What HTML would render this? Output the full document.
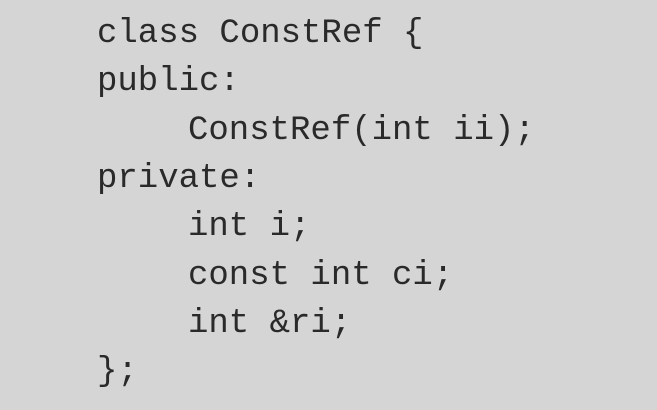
<!DOCTYPE html>
<html><head><style>
html,body{margin:0;padding:0;}
body{width:657px;height:410px;background:#d5d5d5;overflow:hidden;position:relative;}
.l{position:absolute;font-family:"Liberation Mono",monospace;font-size:34px;line-height:48px;color:#2a2a2a;white-space:pre;left:97px;}
.i{left:188px;}
</style></head><body>
<div class="l" style="top:10px">class ConstRef {</div>
<div class="l" style="top:58px">public:</div>
<div class="l i" style="top:107px">ConstRef(int ii);</div>
<div class="l" style="top:155px">private:</div>
<div class="l i" style="top:203px">int i;</div>
<div class="l i" style="top:252px">const int ci;</div>
<div class="l i" style="top:300px">int &amp;ri;</div>
<div class="l" style="top:348px">};</div>
</body></html>
